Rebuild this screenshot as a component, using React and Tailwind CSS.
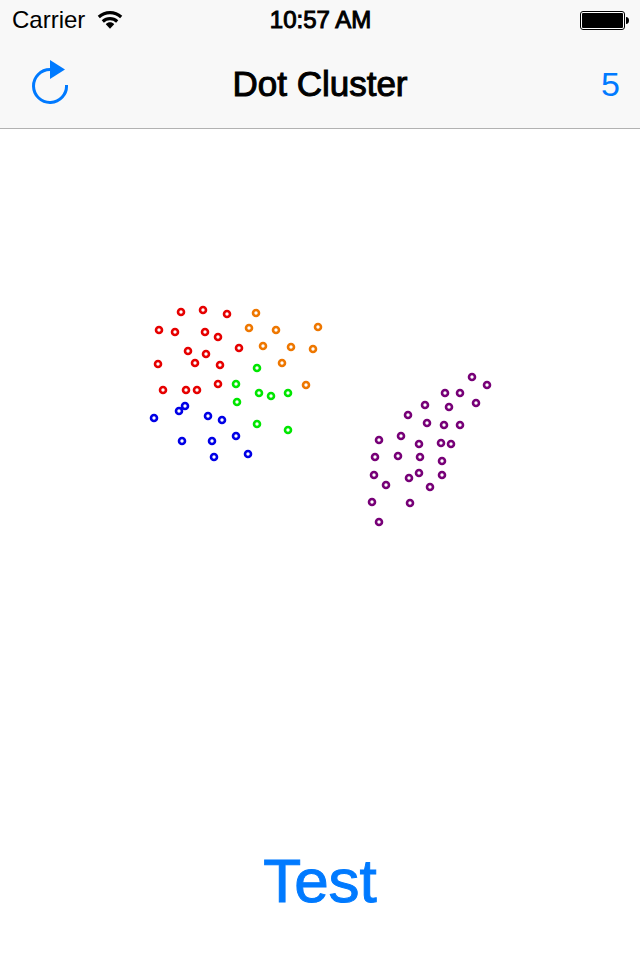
const clusters = [
  {
    name: 'red',
    color: '#e60000',
    dots: [[181,312],[203,310],[227,314],[159,330],[175,332],[205,332],[218,337],[239,348],[188,351],[206,354],[195,363],[220,365],[158,364],[163,390],[186,390],[197,390],[218,384]],
  },
  {
    name: 'orange',
    color: '#ee7700',
    dots: [[256,313],[249,328],[276,330],[318,327],[263,346],[291,347],[313,349],[282,363],[306,385]],
  },
  {
    name: 'green',
    color: '#00e600',
    dots: [[257,368],[236,384],[259,393],[271,396],[288,393],[237,402],[257,424],[288,430]],
  },
  {
    name: 'blue',
    color: '#0000e6',
    dots: [[154,418],[179,411],[185,406],[208,416],[222,420],[182,441],[212,441],[236,436],[214,457],[248,454]],
  },
  {
    name: 'purple',
    color: '#770077',
    dots: [[472,377],[487,385],[445,393],[460,393],[476,403],[425,405],[449,407],[408,415],[427,423],[444,425],[460,425],[401,436],[379,440],[419,444],[441,443],[451,444],[375,457],[398,456],[420,457],[442,461],[374,475],[386,485],[409,478],[419,473],[442,475],[430,487],[372,502],[410,503],[379,522]],
  },
];

function WifiIcon() {
  return (
    <svg width="26" height="20" viewBox="0 0 26 20" aria-hidden="true">
      <g fill="none" stroke="#000" strokeWidth="3.200">
        <path d="M1.800 7C8.300 1.200 17.700 1.200 24.200 7" />
        <path d="M5.800 11.500C10 7.700 16 7.700 20.200 11.500" />
      </g>
      <path d="M8.800 14.300C11 11.700 15 11.700 17.200 14.300L13 18.700Z" />
    </svg>
  );
}

function BatteryIcon() {
  return (
    <svg width="49" height="19" viewBox="0 0 49 19" aria-hidden="true">
      <rect x=".5" y=".5" width="44" height="18" rx="2.500" fill="#fff" stroke="#000" />
      <rect x="2" y="2" width="41" height="15" rx="1" />
      <path d="M46 6C48 6 49 7.500 49 9.500S48 13 46 13Z" />
    </svg>
  );
}

function RefreshIcon() {
  return (
    <svg width="38" height="52" viewBox="0 0 38 52" aria-hidden="true">
      <path d="M18 11.500A16.500 16.500 0 1 0 34.500 27" fill="none" stroke="#007aff" strokeWidth="3" />
      <path d="M18 2V21L33 11.500Z" fill="#007aff" />
    </svg>
  );
}

function StatusBar() {
  return (
    <div className="grid h-10 grid-cols-3 items-center pr-[11px] pl-3 text-2xl">
      <div className="flex items-center gap-3">
        <span>Carrier</span>
        <WifiIcon />
      </div>
      <span className="text-center [-webkit-text-stroke:1px]">10:57 AM</span>
      <div className="flex justify-end">
        <BatteryIcon />
      </div>
    </div>
  );
}

function NavBar() {
  return (
    <div className="grid h-[88px] grid-cols-3 items-center px-5">
      <button type="button" aria-label="Refresh" className="justify-self-start px-3">
        <RefreshIcon />
      </button>
      <h1 className="text-center text-[35px] font-normal whitespace-nowrap [-webkit-text-stroke:1px]">Dot Cluster</h1>
      <button type="button" className="justify-self-end text-[34px] text-[#007aff]">5</button>
    </div>
  );
}

export default function App() {
  return (
    <div className="flex min-h-screen flex-col bg-white font-['Liberation_Sans',Arial,sans-serif] text-black">
      <header className="border-b border-[#b2b2b2] bg-[#f8f8f8]">
        <StatusBar />
        <NavBar />
      </header>
      <main className="flex flex-1 flex-col">
        <svg className="w-full" viewBox="0 129 640 700" role="img" aria-label="Dot clusters">
          {clusters.map((cluster) => (
            <g key={cluster.name} fill="none" stroke={cluster.color} strokeWidth="2.600">
              {cluster.dots.map(([x, y]) => (
                <circle key={`${x}-${y}`} cx={x} cy={y} r="3" />
              ))}
            </g>
          ))}
        </svg>
        <div className="flex flex-1 items-start justify-center pt-4">
          <button type="button" className="text-[62px] leading-[72px] text-[#007aff] [-webkit-text-stroke:1px]">Test</button>
        </div>
      </main>
    </div>
  );
}
